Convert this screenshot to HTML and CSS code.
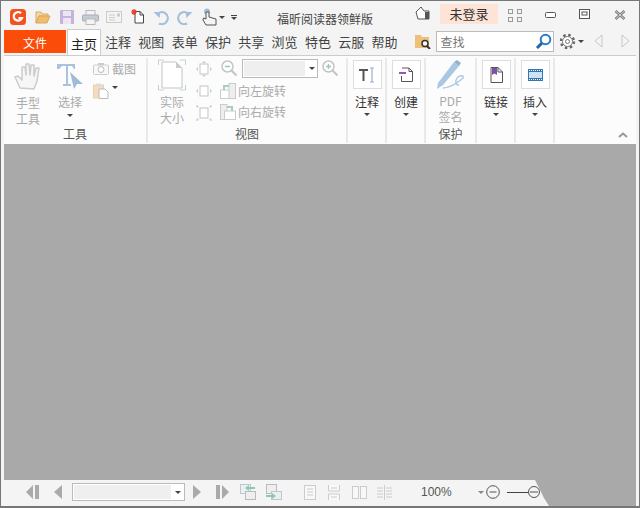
FILE: index.html
```html
<!DOCTYPE html>
<html lang="zh-CN">
<head>
  <meta charset="UTF-8">
  <title>福昕阅读器领鲜版</title>
  <link rel="stylesheet" href="styles.css">
</head>
<body>
<div class="window">

  <!-- title bar -->
  <div class="titlebar">
    <div class="qat">
      <svg class="logo" width="16" height="16" viewBox="0 0 16 16"><rect width="16" height="16" rx="3.5" fill="#f4511e"/><path d="M11 4.200A4.300 4.300 0 1 0 12 9H8.500" fill="none" stroke="#fff" stroke-width="2.200"/></svg>
      <svg class="q-open" width="16" height="14" viewBox="0 0 16 14"><path d="M1 2h5l1 2h6v2H4l-3 7z" fill="#f3d9a8" stroke="#d9a85c"/><path d="M1 13l3-7h11l-3 7z" fill="#f0bd6c" stroke="#d9a85c"/></svg>
      <svg class="q-save" width="14" height="14" viewBox="0 0 14 14"><rect width="14" height="14" rx="1" fill="#c5b3d9"/><rect x="3" y="1" width="8" height="5" fill="#ece6f3"/><rect x="3" y="8" width="8" height="6" fill="#ece6f3"/></svg>
      <svg class="q-print" width="17" height="15" viewBox="0 0 17 15"><rect x="4" y="0.5" width="9" height="5" fill="#f4f4f4" stroke="#bbb"/><rect x="0.5" y="5" width="16" height="6" rx="1" fill="#c4ccd4" stroke="#aab"/><rect x="4" y="9" width="9" height="5.5" fill="#f4f4f4" stroke="#bbb"/></svg>
      <svg class="q-mail" width="16" height="12" viewBox="0 0 16 12"><rect x="0.5" y="0.5" width="15" height="11" fill="#f4f4f4" stroke="#ccc"/><path d="M3 4h6M3 6.5h6M3 9h6" stroke="#ccc"/><rect x="11" y="2.5" width="3" height="3" fill="#ccc"/></svg>
      <svg class="q-new" width="15" height="16" viewBox="0 0 15 16"><path d="M6 3.5h4l3.5 3.5v8H5V3.5z" fill="#fff" stroke="#444"/><path d="M10 3.5v3.5h3.5" fill="none" stroke="#444"/><path d="M4 1v6M1 4h6M2 2l4 4M6 2L2 6" stroke="#e8402a" stroke-width="1.2"/></svg>
      <svg class="q-undo" width="16" height="15" viewBox="0 0 16 15"><path d="M4 4.500A6 6 0 1 1 6 13.500" fill="none" stroke="#a3bfdb" stroke-width="2.200"/><path d="M0.500 2l7 0-1 6z" fill="#a3bfdb"/></svg>
      <svg class="q-redo" width="16" height="15" viewBox="0 0 16 15"><path d="M12 4.500A6 6 0 1 0 10 13.500" fill="none" stroke="#a3bfdb" stroke-width="2.200"/><path d="M15.500 2l-7 0 1 6z" fill="#a3bfdb"/></svg>
      <svg class="q-touch" width="17" height="18" viewBox="0 0 17 18"><circle cx="6" cy="3.5" r="3" fill="#9cc0e0"/><path d="M5 4v7L2.500 10 2 12l3 5h10v-6l-7-2V4z" fill="#f4f4f4" stroke="#555"/></svg>
      <span class="caret q-caret"></span>
      <span class="q-more"></span>
    </div>
    <div class="app-title">福昕阅读器领鲜版</div>
    <div class="title-right">
      <svg class="t-bell" width="15" height="14" viewBox="0 0 15 14"><path d="M1 6l5-5 3 4h5v8H3z" fill="#fff" stroke="#555"/><rect x="10" y="6" width="4" height="7" fill="#555"/></svg>
      <div class="login">未登录</div>
      <svg class="t-grid" width="14" height="13" viewBox="0 0 14 13"><g fill="none" stroke="#999"><rect x="0.500" y="0.500" width="4" height="4"/><rect x="9.500" y="0.500" width="4" height="4"/><rect x="0.500" y="8.500" width="4" height="4"/><rect x="9.500" y="8.500" width="4" height="4"/></g></svg>
      <svg class="t-min" width="11" height="6" viewBox="0 0 11 6"><rect x="0.500" y="0.500" width="10" height="5" rx="1" fill="#fff" stroke="#555"/></svg>
      <svg class="t-max" width="11" height="10" viewBox="0 0 11 10"><rect x="0.500" y="0.500" width="10" height="9" fill="#fff" stroke="#555"/><rect x="3" y="3" width="5" height="3" fill="none" stroke="#555"/></svg>
      <svg class="t-close" width="12" height="10" viewBox="0 0 12 10"><path d="M1.500 1l9 8M10.500 1l-9 8" stroke="#777" stroke-width="2.500"/><path d="M1.500 1l9 8M10.500 1l-9 8" stroke="#eee" stroke-width="0.800"/></svg>
    </div>
  </div>

  <!-- tabs and search -->
  <div class="tabbar">
    <div class="tab-file">文件</div>
    <div class="tab-home">主页</div>
    <div class="tabs">
      <span>注释</span><span>视图</span><span>表单</span><span>保护</span><span>共享</span><span>浏览</span><span>特色</span><span>云服</span><span>帮助</span>
    </div>
    <svg class="find-folder" width="16" height="15" viewBox="0 0 16 15"><path d="M0 1h6l1 2h7v11H0z" fill="#efc078"/><circle cx="10" cy="9.500" r="3" fill="#fff" stroke="#333" stroke-width="1.500"/><path d="M12 12l3 3" stroke="#333" stroke-width="2"/></svg>
    <div class="search">
      <span>查找</span>
      <svg width="17" height="17" viewBox="0 0 17 17"><circle cx="10.500" cy="6.500" r="4.800" fill="#fff" stroke="#2b7cc4" stroke-width="2"/><path d="M7 10l-5 5" stroke="#1f66a8" stroke-width="3"/></svg>
    </div>
    <svg class="gear" width="17" height="17" viewBox="0 0 17 17"><circle cx="8.500" cy="8.500" r="6.500" fill="none" stroke="#666" stroke-width="2.400" stroke-dasharray="2.500 2.600"/><circle cx="8.500" cy="8.500" r="5" fill="#fff" stroke="#777"/><circle cx="8.500" cy="8.500" r="2" fill="#fff" stroke="#777"/></svg>
    <span class="caret gear-caret"></span>
    <svg class="nav-prev" width="9" height="14" viewBox="0 0 9 14"><path d="M8 1v12L1 7z" fill="#f4f4f4" stroke="#c8c8c8"/></svg>
    <svg class="nav-next" width="9" height="14" viewBox="0 0 9 14"><path d="M1 1v12l7-6z" fill="#f4f4f4" stroke="#c8c8c8"/></svg>
  </div>

  <!-- ribbon -->
  <div class="ribbon">
    <div class="group g-tools">
      <div class="group-body">
        <div class="big big-hand">
          <svg width="28" height="27" viewBox="0 0 28 27"><path d="M6 25l-5-11 3-1 4 4V4l3 0 1 8V1h3l1 11 1-10h3l0 11 2-8h3l-2 13-3 8z" fill="#f6f6f6" stroke="#ccc" stroke-width="1.500" stroke-linejoin="round"/></svg>
          <div class="label dim">手型<br>工具</div>
        </div>
        <div class="big big-select">
          <svg width="28" height="26" viewBox="0 0 28 26"><path d="M1 1h18v5h-1l-2-3h-4v18h3v2H7v-2h3V3H6L3 6H1z" fill="#a9c3de"/><path d="M14 9l13 12-6 0-3 5z" fill="#9dbcdb"/></svg>
          <div class="label dim">选择</div>
          <span class="caret"></span>
        </div>
        <div class="small-col">
          <div class="row"><svg width="16" height="12" viewBox="0 0 16 12"><rect x="0.500" y="2" width="15" height="9.500" rx="1" fill="#f8f8f8" stroke="#ccc"/><circle cx="8" cy="6.500" r="3" fill="#fff" stroke="#bbb"/><rect x="5" y="0" width="6" height="2" fill="#ccc"/></svg><span class="dim">截图</span></div>
          <div class="row"><svg width="16" height="16" viewBox="0 0 16 16"><rect x="0.500" y="2" width="10" height="13" fill="#f5dcc0" stroke="#ecd0ae"/><rect x="3" y="0.500" width="5" height="3" fill="#ddd"/><path d="M6 6h6l3 3v6.500H6z" fill="#fff" stroke="#bbb"/></svg><span class="caret"></span></div>
        </div>
      </div>
      <div class="group-name">工具</div>
    </div>

    <div class="group g-view">
      <div class="group-body">
        <div class="big big-actual">
          <svg width="28" height="32" viewBox="0 0 28 32"><path d="M0.500 6V1H6M22 1h5.500v5M27.500 26v5H22M6 31H0.500v-5" fill="none" stroke="#bcd8d0"/><path d="M4 3h14l6 6v20H4z" fill="#fff" stroke="#c4c4c4"/><path d="M18 3v6h6z" fill="#ccc"/></svg>
          <div class="label dim">实际<br>大小</div>
        </div>
        <div class="fit-col">
          <svg width="16" height="16" viewBox="0 0 16 16"><rect x="4" y="3" width="8" height="10" fill="#fff" stroke="#c4c4c4"/><path d="M8 0l2 2H6zM8 16l2-2H6zM0 8l2-2v4zM16 8l-2-2v4z" fill="#b5d6c8"/></svg>
          <svg width="16" height="16" viewBox="0 0 16 16"><rect x="4" y="3" width="8" height="10" fill="#fff" stroke="#c4c4c4"/><path d="M0 8l2-2v4zM16 8l-2-2v4z" fill="#b5d6c8"/></svg>
          <svg width="16" height="16" viewBox="0 0 16 16"><rect x="4" y="3" width="8" height="10" fill="#fff" stroke="#c4c4c4"/><path d="M0 0l3 1-2 2zM16 0l-3 1 2 2zM0 16l3-1-2-2zM16 16l-3-1 2-2z" fill="#b5d6c8"/></svg>
        </div>
        <div class="zoom-col">
          <div class="zoom-row">
            <svg width="16" height="16" viewBox="0 0 16 16"><circle cx="6.500" cy="6.500" r="5.500" fill="#fff" stroke="#c4c4c4" stroke-width="1.500"/><path d="M4 6.500h5" stroke="#9cc9b4" stroke-width="1.500"/><path d="M10.500 10.500l5 5" stroke="#c4c4c4" stroke-width="2"/></svg>
            <div class="combo combo-zoom"><i></i><span class="caret"></span></div>
            <svg width="16" height="16" viewBox="0 0 16 16"><circle cx="6.500" cy="6.500" r="5.500" fill="#fff" stroke="#c4c4c4" stroke-width="1.500"/><path d="M4 6.500h5M6.500 4v5" stroke="#9cc9b4" stroke-width="1.500"/><path d="M10.500 10.500l5 5" stroke="#c4c4c4" stroke-width="2"/></svg>
          </div>
          <div class="row rotate"><svg width="16" height="16" viewBox="0 0 16 16"><rect x="0.500" y="7" width="11" height="8.500" fill="#fff" stroke="#ccc"/><rect x="9" y="0.500" width="6.500" height="15" fill="#eee" stroke="#ccc"/><path d="M9 3H4v4" fill="none" stroke="#a8cfbd" stroke-width="2"/></svg><span class="dim">向左旋转</span></div>
          <div class="row rotate"><svg width="16" height="16" viewBox="0 0 16 16"><rect x="0.500" y="0.500" width="6.500" height="15" fill="#eee" stroke="#ccc"/><rect x="4.500" y="7" width="11" height="8.500" fill="#fff" stroke="#ccc"/><path d="M7 3h5v4" fill="none" stroke="#a8cfbd" stroke-width="2"/></svg><span class="dim">向右旋转</span></div>
        </div>
      </div>
      <div class="group-name">视图</div>
    </div>

    <div class="group g-btn">
      <div class="group-body">
        <div class="tool">
          <div class="tool-box"><svg width="18" height="16" viewBox="0 0 18 16"><path d="M1 2h9v2H6.500v10h-2V4H1z" fill="#555"/><path d="M12 1h4M12 15h4M14 1v14" stroke="#8fb2d3" stroke-width="1.200" fill="none"/></svg></div>
          <div class="label">注释</div><span class="caret"></span>
        </div>
      </div>
    </div>

    <div class="group g-btn">
      <div class="group-body">
        <div class="tool">
          <div class="tool-box"><svg width="14" height="15" viewBox="0 0 14 15"><path d="M3 1h7l3.500 3.500v10h-11V9" fill="#fff" stroke="#555"/><path d="M10 1v3.500h3.500" fill="none" stroke="#555"/><path d="M0 6h7" stroke="#a050b0" stroke-width="2"/></svg></div>
          <div class="label">创建</div><span class="caret"></span>
        </div>
      </div>
    </div>

    <div class="group g-sign">
      <div class="group-body">
        <div class="big big-sign">
          <svg width="31" height="32" viewBox="0 0 31 32"><path d="M3 24L19 3l5 4L8 26l-6 4z" fill="#a9c6e2"/><path d="M19 3l3-2 4 3-2 3z" fill="#8fb2d3"/><path d="M8 29c8 0 18-8 20-10 2-3-4-3-6 0s-2 7 2 7" fill="none" stroke="#a9c6e2" stroke-width="1.300"/></svg>
          <div class="label dim sign-label">PDF<br>签名</div>
        </div>
      </div>
      <div class="group-name">保护</div>
    </div>

    <div class="group g-btn">
      <div class="group-body">
        <div class="tool">
          <div class="tool-box"><svg width="13" height="16" viewBox="0 0 13 16"><path d="M1 0.500h7l4.500 4.500v10.500h-11.500z" fill="#fff" stroke="#555"/><path d="M2 1h5v7L4.500 6.500 2 8z" fill="#7e4fa5"/><path d="M8 0.500V5h4.500" fill="none" stroke="#555"/></svg></div>
          <div class="label">链接</div><span class="caret"></span>
        </div>
      </div>
    </div>

    <div class="group g-btn">
      <div class="group-body">
        <div class="tool">
          <div class="tool-box"><svg width="15" height="12" viewBox="0 0 15 12"><rect width="15" height="12" fill="#2f77b5"/><rect x="1" y="3" width="13" height="6" fill="#cfe3f3"/><path d="M1 1.500h13M1 10.500h13" stroke="#fff" stroke-dasharray="1 1"/></svg></div>
          <div class="label">插入</div><span class="caret"></span>
        </div>
      </div>
    </div>

    <svg class="collapse" width="10" height="6" viewBox="0 0 10 6"><path d="M1 5l4-3.500L9 5" fill="none" stroke="#999" stroke-width="2"/></svg>
  </div>

  <!-- empty document area -->
  <div class="doc"></div>

  <!-- status bar -->
  <div class="statusbar">
    <svg class="s-first" width="14" height="14" viewBox="0 0 14 14"><path d="M7 0v14L0 7zM9 0h4v14H9z" fill="#aaa"/></svg>
    <svg class="s-prev" width="8" height="14" viewBox="0 0 8 14"><path d="M8 0v14L0 7z" fill="#aaa"/></svg>
    <div class="combo combo-page"><i></i><span class="caret"></span></div>
    <svg class="s-next" width="8" height="14" viewBox="0 0 8 14"><path d="M0 0v14l8-7z" fill="#aaa"/></svg>
    <svg class="s-last" width="13" height="14" viewBox="0 0 13 14"><path d="M0 0h4v14H0zM6 0v14l7-7z" fill="#aaa"/></svg>
    <svg class="s-back" width="16" height="16" viewBox="0 0 16 16"><rect x="0.500" y="0.500" width="10" height="9" fill="#eee" stroke="#b8c8d8"/><rect x="5.500" y="7.500" width="10" height="8" fill="#eee" stroke="#bbb"/><path d="M15 4H8" stroke="#8ccab0" stroke-width="2"/><path d="M9 1v6L5 4z" fill="#8ccab0"/></svg>
    <svg class="s-fwd" width="16" height="16" viewBox="0 0 16 16"><rect x="0.500" y="0.500" width="10" height="9" fill="#eee" stroke="#bbb"/><rect x="5.500" y="7.500" width="10" height="8" fill="#eee" stroke="#b8c8d8"/><path d="M0 12h6" stroke="#8ccab0" stroke-width="2"/><path d="M6 9v6l4-3z" fill="#8ccab0"/></svg>
    <svg class="s-single" width="12" height="15" viewBox="0 0 12 15"><rect x="0.500" y="0.500" width="11" height="14" fill="#f8f8f8" stroke="#ccc"/><path d="M3 4h6M3 7h6M3 10h6" stroke="#ccc"/></svg>
    <svg class="s-cont" width="12" height="15" viewBox="0 0 12 15"><path d="M0.500 0v6h11V0M0.500 15V9h11v6" fill="#f8f8f8" stroke="#ccc"/><path d="M3 3h6M3 12h6" stroke="#ccc"/></svg>
    <svg class="s-facing" width="15" height="13" viewBox="0 0 15 13"><rect x="0.500" y="0.500" width="6" height="12" fill="#f8f8f8" stroke="#ccc"/><rect x="8.500" y="0.500" width="6" height="12" fill="#f8f8f8" stroke="#ccc"/></svg>
    <svg class="s-cfacing" width="15" height="15" viewBox="0 0 15 15"><path d="M0 3h6M0 6h6M0 9h6M0 12h6M9 3h6M9 6h6M9 9h6M9 12h6M7.500 0v15" stroke="#ccc"/></svg>
    <div class="zoom-val">100%</div>
    <span class="caret s-caret"></span>
    <svg class="s-minus" width="14" height="14" viewBox="0 0 14 14"><circle cx="7" cy="7" r="6.300" fill="none" stroke="#555"/><path d="M3.500 7h7" stroke="#555"/></svg>
    <div class="slider"></div>
    <svg class="s-thumb" width="12" height="14" viewBox="0 0 12 14"><circle cx="6" cy="7" r="5.500" fill="#f3f3f3" stroke="#555"/><path d="M2 7h8" stroke="#555"/></svg>
  </div>

  <!-- the gray patch left over the corner of the status bar -->
  <div class="corner-patch"></div>
</div>
</body>
</html>
```
FILE: styles.css
```css
* {
  box-sizing: border-box;
}

body {
  margin: 0;
  font-family: "Noto Sans CJK SC", "Liberation Sans", sans-serif;
  font-size: 12px;
  color: #333;
}

svg {
  display: block;
  flex: none;
}

.window {
  position: relative;
  width: 640px;
  height: 508px;
  display: flex;
  flex-direction: column;
  background: #f4f4f4;
  border: 1px solid #777;
  border-width: 1px 1px 2px 1px;
  padding: 0 3px 0 3px;
  overflow: hidden;
}

.dim {
  color: #aaa;
}

.caret {
  display: block;
  width: 0;
  height: 0;
  border-left: 3px solid transparent;
  border-right: 3px solid transparent;
  border-top: 3px solid #444;
  flex: none;
}

/* title bar */
.titlebar {
  height: 28px;
  display: flex;
  align-items: center;
  margin-left: -3px;
}

.qat {
  width: 276px;
  display: flex;
  align-items: center;
  padding-top: 4px;
}

.logo { margin-left: 9px; }
.q-open { margin-left: 9px; }
.q-save { margin-left: 9px; }
.q-print { margin-left: 8px; }
.q-mail { margin-left: 7px; }
.q-new { margin-left: 8px; margin-top: -2px; }
.q-undo { margin-left: 8px; }
.q-redo { margin-left: 8px; }
.q-touch { margin-left: 8px; }
.q-caret { margin-left: 1px; }

.q-more {
  margin-left: 6px;
  width: 6px;
  height: 5px;
  border-top: 1px solid #444;
}

.q-more::after {
  content: "";
  display: block;
  margin-top: 1px;
  border-left: 3px solid transparent;
  border-right: 3px solid transparent;
  border-top: 3px solid #444;
}

.app-title {
  width: 96px;
  margin-top: 6px;
  color: #444;
  white-space: nowrap;
}

.title-right {
  display: flex;
  align-items: center;
  flex: 1;
  padding-top: 2px;
}

.t-bell { margin-left: 42px; margin-top: -6px; }

.login {
  margin-left: 10px;
  margin-top: -4px;
  width: 58px;
  height: 20px;
  background: #fde4d7;
  text-align: center;
  line-height: 20px;
  font-size: 13px;
}

.t-grid { margin-left: 10px; margin-top: -2px; }
.t-min { margin-left: 23px; margin-top: -2px; }
.t-max { margin-left: 23px; margin-top: -4px; }
.t-close { margin-left: 24px; margin-top: -2px; }

/* tab row */
.tabbar {
  height: 26px;
  padding-bottom: 2px;
  display: flex;
  align-items: center;
}

.tab-file {
  align-self: flex-end;
  width: 62px;
  height: 23px;
  background: #fb4c0a;
  color: #fff;
  text-align: center;
  line-height: 25px;
  font-size: 12px;
}

.tab-home {
  align-self: flex-end;
  width: 34px;
  height: 26px;
  margin-left: 1px;
  margin-bottom: -2px;
  background: #fff;
  border: 1px solid #ccc;
  border-bottom: none;
  text-align: center;
  line-height: 27px;
  font-size: 13px;
  color: #222;
  position: relative;
  z-index: 1;
}

.tabs {
  display: flex;
  gap: 7.300px;
  margin-left: 4px;
  margin-top: 1px;
  font-size: 13px;
  color: #444;
}

.tabs span {
  white-space: nowrap;
}

.find-folder { margin-left: 17px; }

.search {
  margin-left: 5px;
  width: 118px;
  height: 21px;
  border: 1px solid #bbb;
  background: #fff;
  display: flex;
  align-items: center;
  justify-content: space-between;
  padding: 0 1px 0 4px;
  color: #777;
}

.gear { margin-left: 5px; }
.gear-caret { margin-left: 2px; }
.nav-prev { margin-left: 10px; }
.nav-next { margin-left: 18px; }

/* ribbon */
.ribbon {
  height: 89px;
  background: #fcfcfc;
  border-top: 1px solid #ccc;
  display: flex;
  position: relative;
  padding-top: 2px;
}

.group {
  display: flex;
  flex-direction: column;
  height: 85px;
  border-right: 2px solid #e9e9e9;
}

.group-body {
  flex: 1;
  display: flex;
  min-height: 0;
}

.group-name {
  height: 18px;
  text-align: center;
  line-height: 18px;
  color: #555;
}

.g-tools { width: 144px; }
.g-view { width: 200px; }
.g-btn { width: 39px; }
.g-sign { width: 51px; }

.big {
  display: flex;
  flex-direction: column;
  align-items: center;
}

.label {
  line-height: 16px;
  text-align: center;
  white-space: nowrap;
}

.big-hand {
  margin-left: 9px;
  width: 30px;
  padding-top: 5px;
}

.big-hand .label { margin-top: 5px; }

.big-select {
  margin-left: 12px;
  width: 30px;
  padding-top: 5px;
}

.big-select .label { margin-top: 5px; }
.big-select .caret { margin-top: 4px; }

.small-col {
  margin-left: 8px;
  padding-top: 2px;
  display: flex;
  flex-direction: column;
  gap: 6px;
}

.row {
  display: flex;
  align-items: center;
  gap: 3px;
}

.row .caret {
  align-self: flex-start;
  margin-top: 3px;
}

.big-actual {
  margin-left: 10px;
  width: 28px;
  padding-top: 1px;
}

.big-actual .label { margin-top: 3px; }

.fit-col {
  margin-left: 10px;
  padding-top: 3px;
  display: flex;
  flex-direction: column;
  gap: 6px;
}

.zoom-col {
  margin-left: 9px;
  display: flex;
  flex-direction: column;
  gap: 4px;
}

.zoom-row {
  display: flex;
  align-items: center;
  gap: 5px;
  height: 20px;
}

.combo {
  background: #fff;
  border: 1px solid #bbb;
  display: flex;
  align-items: center;
  padding: 1px;
}

.combo i {
  display: block;
  height: 100%;
  background: #efefef;
}

.combo .caret {
  margin-left: 4px;
}

.combo-zoom {
  width: 76px;
  height: 19px;
  margin-right: -1px;
}

.combo-zoom i { width: 61px; }

.rotate {
  height: 17px;
  margin-left: -1px;
  gap: 2px;
}

.g-btn .group-body {
  justify-content: center;
  padding-left: 1px;
}

.tool {
  display: flex;
  flex-direction: column;
  align-items: center;
  padding-top: 2px;
}

.tool-box {
  width: 29px;
  height: 29px;
  background: #fff;
  border: 1px solid #ddd;
  display: flex;
  align-items: center;
  justify-content: center;
}

.tool .label {
  margin-top: 5px;
  color: #333;
}

.tool .caret { margin-top: 3px; }

.big-sign {
  width: 100%;
  padding-top: 1px;
}

.sign-label { margin-top: 2px; }

.collapse {
  position: absolute;
  right: 8px;
  bottom: 6px;
}

/* document area */
.doc {
  flex: 1;
  background: #a9a9a9;
}

/* status bar */
.statusbar {
  height: 24px;
  margin-bottom: 2px;
  display: flex;
  align-items: center;
}

.s-first { margin-left: 22px; }
.s-prev { margin-left: 14px; }

.combo-page {
  margin-left: 10px;
  width: 113px;
  height: 18px;
}

.combo-page i { width: 97px; }

.s-next { margin-left: 8px; }
.s-last { margin-left: 15px; }
.s-back { margin-left: 11px; }
.s-fwd { margin-left: 10px; }
.s-single { margin-left: 22px; }
.s-cont { margin-left: 12px; }
.s-facing { margin-left: 12px; }
.s-cfacing { margin-left: 10px; }

.zoom-val {
  margin-left: 29px;
  width: 32px;
  font-family: "Liberation Sans", sans-serif;
  font-size: 12px;
  color: #555;
}

.s-caret {
  margin-left: 25px;
  border-top-color: #888;
}

.s-minus { margin-left: 2px; }

.slider {
  margin-left: 7px;
  width: 22px;
  height: 1px;
  background: #444;
}

.s-thumb { margin-left: -1px; }

.corner-patch {
  position: absolute;
  left: 534px;
  right: 3px;
  top: 479px;
  bottom: 0;
  background: #a9a9a9;
  clip-path: polygon(0 0, 9px 18px, 14px 100%, 100% 100%, 100% 0);
}
```
